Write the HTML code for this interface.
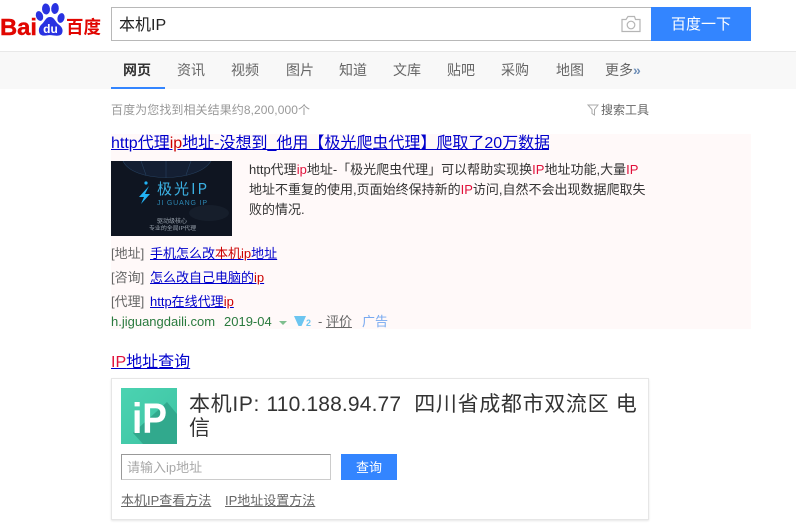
<!DOCTYPE html>
<html lang="zh"><head><meta charset="utf-8"><style>
*{margin:0;padding:0;box-sizing:border-box}
html,body{width:796px;height:530px;overflow:hidden;background:#fff}
body{position:relative;font-family:"Liberation Sans","WenQuanYi Zen Hei","Noto Sans CJK SC",sans-serif;color:#333}
.a{position:absolute;white-space:nowrap}
u{text-decoration:underline}
.l{color:#00c}.r{color:#c00}.g{color:#666}.p{color:#e0103a}
.n{top:61px;font-size:14px;line-height:18px;color:#666}
.t{display:inline-block;width:39px;color:#666}
.s{font-size:13px;line-height:16px}
</style></head><body>
<svg class="a" style="left:0;top:0" width="106" height="42" viewBox="0 0 106 42">
<g fill="#2932e1"><ellipse cx="46" cy="9" rx="4" ry="5.500" transform="rotate(-5 46 9)"/><ellipse cx="55" cy="8.500" rx="3.800" ry="5.500" transform="rotate(5 55 8.500)"/><ellipse cx="39.500" cy="16" rx="3.500" ry="5" transform="rotate(-20 39.500 16)"/><ellipse cx="61" cy="18" rx="3.500" ry="5" transform="rotate(15 61 18)"/><path d="M50 17c-4 0-5 4-8 7-2.500 2-3.500 5-3 7.500.5 4 4 4.500 7 4 3-.5 5-.5 8 0 4 .5 8 .5 8.500-4 .5-3-1.500-5.500-4.500-7.500-3-3-4-7-8-7z"/></g>
<text x="50.500" y="33" text-anchor="middle" font-family="Liberation Sans" font-weight="700" font-size="12" fill="#fff">du</text>
<text x="0" y="35" font-family="Liberation Sans" font-weight="700" font-size="23" fill="#e10601" stroke="#e10601" stroke-width=".4" textLength="37" lengthAdjust="spacingAndGlyphs">Bai</text>
<text x="66" y="33.500" font-family="Noto Sans CJK SC" font-weight="700" font-size="18" fill="#e10601" textLength="35" lengthAdjust="spacingAndGlyphs">百度</text>
</svg>
<div class="a" style="left:111px;top:7px;width:540px;height:34px;border:1px solid #b8b8b8;border-right:0;font-size:16px;line-height:36px;padding-left:7px;color:#222">本机IP</div>
<svg class="a" style="left:621px;top:15px" width="20" height="18" viewBox="0 0 20 18" fill="none" stroke="#b5b5b5" stroke-width="1.200"><path d="M1 4.500h4l2-3h6.500l1 3H19v12H1z"/><circle cx="10" cy="10" r="3.800"/></svg>
<div class="a" style="left:651px;top:7px;width:100px;height:34px;background:#3385ff;color:#fff;font-size:15px;line-height:36px;text-align:center">百度一下</div>

<div class="a" style="left:0;top:51px;width:796px;height:38px;background:#f8f8f8;border-top:1px solid #e8e8e8"></div>
<div class="a" style="left:111px;top:87px;width:54px;height:2px;background:#3385ff"></div>
<div class="a n" style="left:123px;color:#333;font-weight:700">网页</div>
<div class="a n" style="left:177px">资讯</div>
<div class="a n" style="left:231px">视频</div>
<div class="a n" style="left:286px">图片</div>
<div class="a n" style="left:339px">知道</div>
<div class="a n" style="left:393px">文库</div>
<div class="a n" style="left:447px">贴吧</div>
<div class="a n" style="left:501px">采购</div>
<div class="a n" style="left:556px">地图</div>
<div class="a n" style="left:605px">更多<span style="color:#6f8fb8;font-weight:700">»</span></div>

<div class="a" style="left:111px;top:102px;font-size:12px;line-height:16px;color:#999;letter-spacing:.08px">百度为您找到相关结果约8,200,000个</div>
<svg class="a" style="left:587px;top:104px" width="12" height="12" viewBox="0 0 12 12" fill="none" stroke="#aaa"><path d="M1 1h10L7.500 5.500V11L5 9.500v-4z"/></svg>
<div class="a" style="left:601px;top:102px;font-size:12px;line-height:16px;color:#666">搜索工具</div>

<div class="a" style="left:111px;top:134px;width:640px;height:195px;background:#fff9f9"></div>
<div class="a l" style="left:111px;top:134px;font-size:16px;line-height:20px;width:438px;height:22px;overflow:hidden"><u>http代理<span class="r">ip</span>地址-没想到_他用【极光爬虫代理】爬取了20万数据</u></div>

<svg class="a" style="left:111px;top:161px" width="121" height="75" viewBox="0 0 121 75">
<rect width="121" height="75" fill="#0f1521"/>
<path d="M12 0c10 22 75 22 88 0" fill="#141f33"/>
<path d="M12 0c10 22 75 22 88 0M30 0l5 14M55 0v17M80 0l-5 14" fill="none" stroke="#26405e" stroke-width=".6"/>
<ellipse cx="98" cy="52" rx="20" ry="8" fill="#161e2b"/>
<path d="M38 25L28 36h5l-3 7 9-10h-5l4-8z" fill="#22b3f5"/><circle cx="35" cy="22" r="1.600" fill="#22b3f5"/>
<text x="46" y="33" font-family="Noto Sans CJK SC" font-size="15" fill="#3bb0e2" textLength="50" lengthAdjust="spacing">极光IP</text>
<text x="46" y="44" font-family="Liberation Sans" font-size="7" fill="#2c88b4" textLength="50" lengthAdjust="spacing">JI GUANG IP</text>
<text x="46" y="62" font-family="Noto Sans CJK SC" font-size="6" fill="#9aa3ae" textLength="30" lengthAdjust="spacingAndGlyphs">驱动级核心</text>
<text x="38" y="69" font-family="Noto Sans CJK SC" font-size="5.500" fill="#9aa3ae" textLength="47" lengthAdjust="spacingAndGlyphs">专业的全局IP代理</text>
</svg>

<div class="a" style="left:249px;top:160px;width:410px;font-size:13px;line-height:20px;color:#333">http代理<span class="p">ip</span>地址-「极光爬虫代理」可以帮助实现换<span class="p">IP</span>地址功能,大量<span class="p">IP</span><br>地址不重复的使用,页面始终保持新的<span class="p">IP</span>访问,自然不会出现数据爬取失<br>败的情况.</div>

<div class="a s" style="left:111px;top:246px"><span class="t">[地址]</span><u class="l">手机怎么改<span class="r">本机ip</span>地址</u></div>
<div class="a s" style="left:111px;top:270px"><span class="t">[咨询]</span><u class="l">怎么改自己电脑的<span class="r">ip</span></u></div>
<div class="a s" style="left:111px;top:294px"><span class="t">[代理]</span><u class="l">http在线代理<span class="r">ip</span></u></div>
<div class="a s" style="left:111px;top:314px;color:#2a7a3e">h.jiguangdaili.com</div>
<div class="a s" style="left:224px;top:314px;color:#2a7a3e">2019-04</div>
<div class="a" style="left:279px;top:321px;border:4px solid transparent;border-top:4px solid #7fbf8f"></div>
<svg class="a" style="left:294px;top:316px" width="19" height="11" viewBox="0 0 19 11"><path d="M0 0h12L7.500 10h-3z" fill="#6cc5f0"/><text x="12" y="10" font-family="Liberation Sans" font-weight="700" font-size="9" fill="#6cc5f0">2</text></svg>
<div class="a g s" style="left:318px;top:314px">- <u>评价</u></div>
<div class="a s" style="left:362px;top:314px;color:#77a9f0">广告</div>

<div class="a l" style="left:111px;top:353px;font-size:16px;line-height:20px"><u><span class="p">IP</span>地址查询</u></div>

<div class="a" style="left:111px;top:378px;width:538px;height:142px;background:#fff;border:1px solid #e6e6e6;box-shadow:0 1px 2px rgba(0,0,0,.1)"></div>
<svg class="a" style="left:121px;top:388px" width="56" height="56" viewBox="0 0 56 56">
<defs><linearGradient id="c" x1="0" y1="0" x2="1" y2="1"><stop offset="0" stop-color="#4bd3b1"/><stop offset="1" stop-color="#3ec3a3"/></linearGradient></defs>
<rect width="56" height="56" fill="url(#c)"/>
<path d="M46 14L56 26V56H22L12 45z" fill="#31a98d"/>
<text x="11" y="45" font-family="Liberation Sans" font-weight="700" font-size="43" fill="#fff" textLength="35" lengthAdjust="spacingAndGlyphs">iP</text>
</svg>
<div class="a" style="left:189px;top:393px;font-size:21px;line-height:24px;color:#333"><span style="letter-spacing:.67px">本机IP: </span><span style="letter-spacing:.15px">110.188.94.77</span><span style="letter-spacing:.67px"> &nbsp;四川省成都市双流区 电<br>信</span></div>
<div class="a" style="left:121px;top:454px;width:210px;height:26px;border:1px solid #ccc;border-top-color:#999;border-left-color:#999;font-size:13px;line-height:26px;padding-left:5px;color:#a8a8a8">请输入ip地址</div>
<div class="a" style="left:341px;top:454px;width:56px;height:26px;background:#3385ff;color:#fff;font-size:13px;line-height:28px;text-align:center">查询</div>
<div class="a g s" style="left:121px;top:493px"><u>本机IP查看方法</u></div>
<div class="a g s" style="left:225px;top:493px"><u>IP地址设置方法</u></div>
</body></html>
